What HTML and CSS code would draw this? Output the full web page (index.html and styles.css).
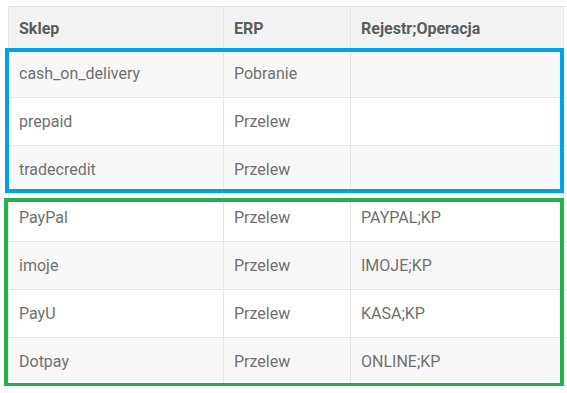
FILE: index.html
```html
<!DOCTYPE html>
<html lang="en">
<head>
    <meta charset="UTF-8">
    <meta name="viewport" content="width=device-width, initial-scale=1.0">
    <title>Mapowanie płatności</title>
    <link rel="stylesheet" href="styles.css">
</head>
<body>
    <div class="wrap">
        <table class="payments">
            <thead>
                <tr>
                    <th class="col-shop">Sklep</th>
                    <th class="col-erp">ERP</th>
                    <th class="col-reg">Rejestr;Operacja</th>
                    <th class="col-extra"></th>
                </tr>
            </thead>
            <tbody>
                <tr><td>cash_on_delivery</td><td>Pobranie</td><td></td><td class="col-extra"></td></tr>
                <tr><td>prepaid</td><td>Przelew</td><td></td><td class="col-extra"></td></tr>
                <tr><td>tradecredit</td><td>Przelew</td><td></td><td class="col-extra"></td></tr>
                <tr><td>PayPal</td><td>Przelew</td><td>PAYPAL;KP</td><td class="col-extra"></td></tr>
                <tr><td>imoje</td><td>Przelew</td><td>IMOJE;KP</td><td class="col-extra"></td></tr>
                <tr><td>PayU</td><td>Przelew</td><td>KASA;KP</td><td class="col-extra"></td></tr>
                <tr><td>Dotpay</td><td>Przelew</td><td>ONLINE;KP</td><td class="col-extra"></td></tr>
            </tbody>
        </table>

        <!-- marker frames drawn over the two groups of rows -->
        <div class="mark mark-blue"></div>
        <div class="mark mark-green"></div>
    </div>
</body>
</html>
```

FILE: styles.css
```css
body{
    margin: 0;
    overflow: hidden;
    background: #fff;
}

.wrap{
    position: relative;
    padding: 6px 0 0 8px;
}

.payments{
    border-collapse: collapse;
    font-family: Roboto, 'Liberation Sans', sans-serif;
    font-size: 16px;
    color: #707070;
    table-layout: fixed;
    width: 559px;
}

.payments th,
.payments td{
    border: 1px solid #e6e6e6;
    padding: 0 14px 0 10px;
    text-align: left;
    white-space: nowrap;
}

.payments th{
    height: 42px;
    background: #f3f3f3;
    color: #5c5c5c;
    font-weight: 700;
    font-size: 16px;
}

.payments td{
    height: 47px;
}

.payments tbody tr:nth-child(odd){
    background: #f8f8f8;
}

.col-shop{ width: 190px; }
.col-erp{ width: 102px; }
.col-reg{ width: 188px; }

.payments .col-extra{
    width: 3px;
    padding: 0;
    border-right: none;
    background: #fff;
}

.mark{
    position: absolute;
    box-sizing: border-box;
    border: 4px solid;
}

.mark-blue{
    border-color: #00a2e8;
    left: 5px;
    top: 48px;
    width: 559px;
    height: 145px;
}

.mark-green{
    border-color: #22b14c;
    left: 4px;
    top: 198px;
    width: 560px;
    height: 190px;
    border-width: 4px 4px 5px 4px;
}
```
